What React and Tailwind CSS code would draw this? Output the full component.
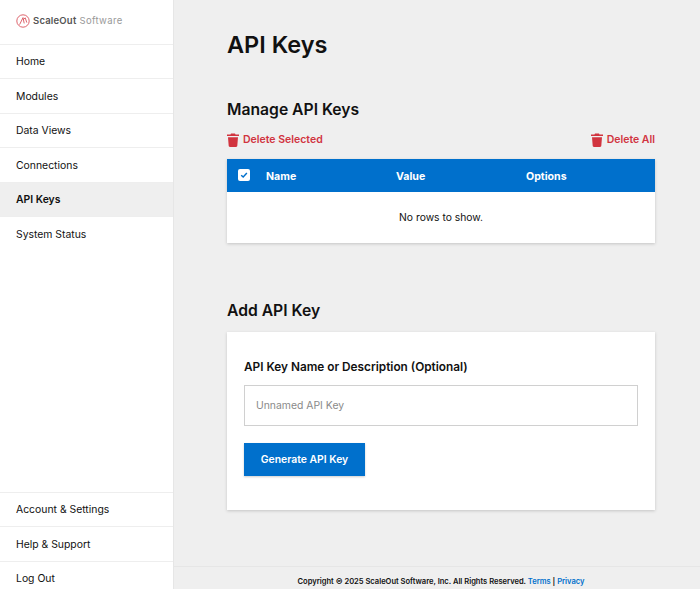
const topLinks = ["Home", "Modules", "Data Views", "Connections", "API Keys", "System Status"];
const bottomLinks = ["Account & Settings", "Help & Support", "Log Out"];

function TrashIcon() {
  return (
    <svg viewBox="0 0 12 14" className="w-[12px] h-[14px] fill-[#d1343f]">
      <path d="M4 0.5h4l.5 1H12v1.6H0V1.5h3.5zM1 4.2h10l-.7 8.6c-.05.7-.5 1.2-1.2 1.2H2.9c-.7 0-1.15-.5-1.2-1.2z" />
    </svg>
  );
}

function Logo() {
  return (
    <div className="h-[43.5px] flex items-center pl-4 pb-[2px] gap-[3px]">
      <svg viewBox="0 0 14 14" className="w-[14px] h-[14px] fill-none stroke-[#d9525c]" strokeWidth="0.9">
        <circle cx="7" cy="7" r="6.2" />
        <path d="M3.6 10.6 7 3.6 8.2 9.4M7.2 5.8 9.2 3.8 10.8 8.6" />
      </svg>
      <span className="text-[9.5px] font-semibold tracking-[0.2px] text-[#555]">ScaleOut</span>
      <span className="text-[9.5px] text-[#999] tracking-[0.35px]">Software</span>
    </div>
  );
}

function NavItem({ label, active }) {
  return (
    <div
      className={
        "h-[34.5px] flex items-center pl-4 pt-[2px] text-[10.4px] text-[#111] border-t border-[#eeeeee] " +
        (active ? "bg-[#efefef] font-semibold" : "")
      }
    >
      {label}
    </div>
  );
}

export default function App() {
  return (
    <div className="h-screen overflow-hidden flex bg-[#efefef] font-['Inter',sans-serif]">
      <aside className="w-[174px] shrink-0 bg-white border-r border-[#e6e6e6] flex flex-col overflow-hidden">
        <Logo />
        {topLinks.map((l) => (
          <NavItem key={l} label={l} active={l === "API Keys"} />
        ))}
        <div className="flex-1" />
        <div className="shrink-0 -mb-[6px]">
          {bottomLinks.map((l) => (
            <NavItem key={l} label={l} />
          ))}
        </div>
      </aside>

      <main className="flex-1 flex flex-col min-w-0">
        <div className="flex-1 pl-[53px] pr-[45px] pt-[30px]">
          <h1 className="text-[23.5px] leading-[30px] font-semibold text-[#111]">API Keys</h1>

          <h2 className="mt-[40px] text-[15.7px] leading-[20px] font-semibold text-[#111]">Manage API Keys</h2>
          <div className="mt-[10px] h-[20px] flex items-center justify-between text-[10.5px] font-semibold text-[#d1343f]">
            <button className="flex items-center gap-[4px]">
              <TrashIcon />
              Delete Selected
            </button>
            <button className="flex items-center gap-[4px]">
              <TrashIcon />
              Delete All
            </button>
          </div>

          <div className="mt-[9px] bg-white shadow-[0_1px_3px_rgba(0,0,0,0.18)]">
            <div className="h-[33px] bg-[#0070cc] flex items-center text-white text-[10.6px] font-bold">
              <div className="w-[39px] pl-[11px] pb-[1px]">
                <div className="w-[12px] h-[12px] bg-white rounded-[2px] flex items-center justify-center">
                  <svg viewBox="0 0 10 10" className="w-[8px] h-[8px] fill-none stroke-[#0070cc]" strokeWidth="1.8">
                    <path d="M1.5 5.2 4 7.6 8.6 2.6" />
                  </svg>
                </div>
              </div>
              <div className="w-[130px] pt-[2px]">Name</div>
              <div className="w-[130px] pt-[2px]">Value</div>
              <div className="pt-[2px]">Options</div>
            </div>
            <div className="h-[51px] flex items-center justify-center text-[10.3px] text-[#111]">No rows to show.</div>
          </div>

          <h2 className="mt-[58px] text-[15.7px] leading-[20px] font-semibold text-[#111]">Add API Key</h2>
          <div className="mt-[11px] bg-white shadow-[0_1px_3px_rgba(0,0,0,0.18)] px-[17px] pt-[27px] pb-[34px]">
            <label className="block text-[11.8px] leading-[16px] font-semibold text-[#111]">
              API Key Name or Description (Optional)
            </label>
            <input
              placeholder="Unnamed API Key"
              className="mt-[10px] block w-full h-[41px] border border-[#d0d0d0] px-[11px] text-[10.4px] outline-none placeholder:text-[#8a8a8a]"
            />
            <button className="mt-[17px] w-[121px] h-[33px] bg-[#0070cc] text-white text-[10.4px] font-semibold shadow-[0_1px_2px_rgba(0,0,0,0.2)]">
              Generate API Key
            </button>
          </div>
        </div>

        <footer className="h-[23px] shrink-0 border-t border-[#e6e6e6] pt-[9px] pl-2 text-center text-[7.55px] leading-[12px] font-semibold text-[#111]">
          Copyright © 2025 ScaleOut Software, Inc. All Rights Reserved.{" "}
          <span className="text-[#0070cc]">Terms</span> | <span className="text-[#0070cc]">Privacy</span>
        </footer>
      </main>
    </div>
  );
}
